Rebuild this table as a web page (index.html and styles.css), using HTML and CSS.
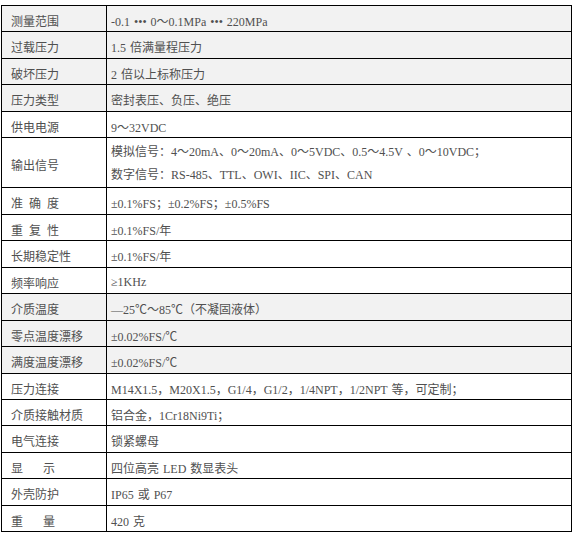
FILE: index.html
```html
<!DOCTYPE html>
<html lang="zh-CN">
<head>
<meta charset="utf-8">
<title>技术参数</title>
<link rel="stylesheet" href="styles.css">
</head>
<body>
<div class="spec">
  <div class="row alt p26"><div class="k">测量范围</div><div class="v">-0.1 ••• 0～0.1MPa ••• 220MPa</div></div>
  <div class="row alt p27"><div class="k">过载压力</div><div class="v">1.5 倍满量程压力</div></div>
  <div class="row alt p26"><div class="k">破坏压力</div><div class="v">2 倍以上标称压力</div></div>
  <div class="row alt p27"><div class="k">压力类型</div><div class="v">密封表压、负压、绝压</div></div>
  <div class="row p26"><div class="k">供电电源</div><div class="v">9～32VDC</div></div>
  <div class="row p50"><div class="k">输出信号</div><div class="v multi"><span>模拟信号：4～20mA、0～20mA、0～5VDC、0.5～4.5V 、0～10VDC；</span><span>数字信号：RS-485、TTL、OWI、IIC、SPI、CAN</span></div></div>
  <div class="row p27"><div class="k">准&ensp;确&ensp;度</div><div class="v">±0.1%FS；±0.2%FS；±0.5%FS</div></div>
  <div class="row p26"><div class="k">重&ensp;复&ensp;性</div><div class="v">±0.1%FS/年</div></div>
  <div class="row p27"><div class="k">长期稳定性</div><div class="v">±0.1%FS/年</div></div>
  <div class="row p26"><div class="k">频率响应</div><div class="v">≥1KHz</div></div>
  <div class="row alt p27"><div class="k">介质温度</div><div class="v">—25℃～85℃（不凝固液体）</div></div>
  <div class="row alt p26"><div class="k">零点温度漂移</div><div class="v">±0.02%FS/℃</div></div>
  <div class="row alt p27"><div class="k">满度温度漂移</div><div class="v">±0.02%FS/℃</div></div>
  <div class="row p26"><div class="k">压力连接</div><div class="v">M14X1.5，M20X1.5，G1/4，G1/2，1/4NPT，1/2NPT 等，可定制；</div></div>
  <div class="row p26"><div class="k">介质接触材质</div><div class="v">铝合金，1Cr18Ni9Ti；</div></div>
  <div class="row p27"><div class="k">电气连接</div><div class="v">锁紧螺母</div></div>
  <div class="row p26"><div class="k">显<span class="gap"></span>示</div><div class="v">四位高亮 LED 数显表头</div></div>
  <div class="row p27"><div class="k">外壳防护</div><div class="v">IP65 或 P67</div></div>
  <div class="row p26"><div class="k">重<span class="gap"></span>量</div><div class="v">420 克</div></div>
</div>
</body>
</html>
```

FILE: styles.css
```css
html, body {
  margin: 0;
  padding: 0;
  background: #ffffff;
}

body {
  padding: 5px 0 0 1px;
  font-family: "Liberation Serif", "Noto Sans CJK SC", serif;
  font-size: 12px;
  color: #505050;
}

.spec {
  box-sizing: border-box;
  width: 571px;
  border-top: 1px solid #000;
  border-left: 1px solid #000;
  border-right: 1px solid #000;
}

.row {
  box-sizing: border-box;
  display: grid;
  grid-template-columns: 105px 1fr;
  border-bottom: 1px solid #000;
  background: #ffffff;
}

.row.alt {
  background: #f2f2f2;
}

.p26 { height: 26px; }
.p27 { height: 27px; }
.p50 { height: 50px; }

.k, .v {
  display: flex;
  align-items: center;
  padding-top: 4px;
  box-sizing: border-box;
  white-space: nowrap;
}

.k {
  border-right: 1px solid #000;
  padding-left: 9px;
}

.v {
  padding-left: 4px;
  word-spacing: 1px;
}

.v.multi {
  flex-direction: column;
  align-items: flex-start;
  justify-content: center;
  line-height: 23px;
  padding-top: 3px;
}

.gap {
  display: inline-block;
  width: 20px;
}
```
